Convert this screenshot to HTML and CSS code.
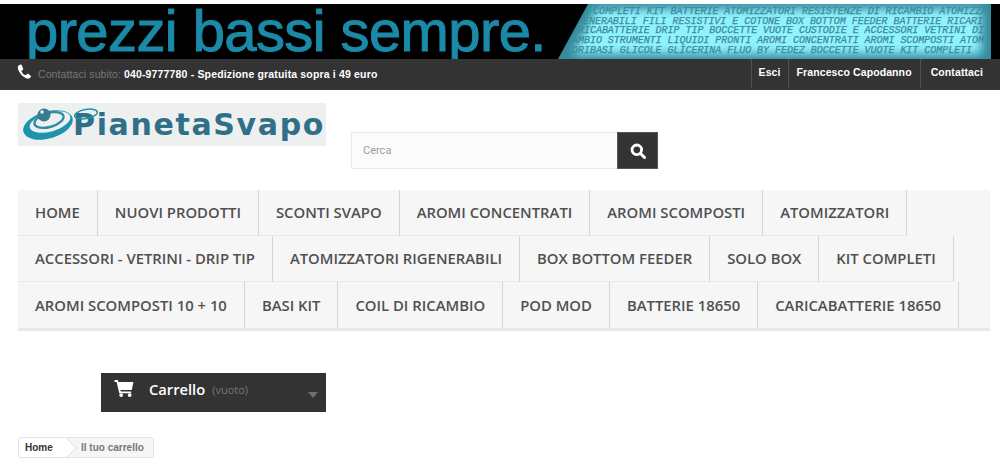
FILE: index.html
```html
<!DOCTYPE html>
<html lang="it">
<head>
<meta charset="utf-8">
<title>Carrello - PianetaSvapo</title>
<link rel="stylesheet" href="styles.css">
</head>
<body>
<div class="banner">
  <div class="slogan">prezzi bassi sempre.</div>
  <div class="ticker">
    <div class="glow"></div>
    <div class="ticker-text">
      <div class="t1">COMPLETI KIT BATTERIE ATOMIZZATORI RESISTENZE DI RICAMBIO ATOMIZZA</div>
      <div class="t2">ENERABILI FILI RESISTIVI E COTONE BOX BOTTOM FEEDER BATTERIE RICARI</div>
      <div class="t3">RICABATTERIE DRIP TIP BOCCETTE VUOTE CUSTODIE E ACCESSORI VETRINI DI</div>
      <div class="t4">AMBIO STRUMENTI LIQUIDI PRONTI AROMI CONCENTRATI AROMI SCOMPOSTI ATOM</div>
      <div class="t5">ORIBASI GLICOLE GLICERINA FLUO BY FEDEZ BOCCETTE VUOTE KIT COMPLETI</div>
    </div>
  </div>
</div>
<div class="topbar">
  <div class="contact">
    <svg class="phone" viewBox="0 0 16 16" width="15" height="15"><path fill="#fff" d="M3.6.6 1.4 1.900C.2 3.300 1 6.500 3.200 9.700c2.300 3.300 5.300 5.700 8.200 5.900 1.200.1 2-.3 3.300-1.800.4-.5.300-1-.1-1.300l-2.700-2c-.5-.3-.9-.2-1.300.2l-.8.9c-.3.300-.7.300-1 .1C7.200 11.700 5.400 9.500 4.800 7.700c-.1-.4 0-.7.4-.9l1-.6c.5-.3.600-.7.400-1.200L5 1c-.3-.6-.8-.7-1.400-.4z"/></svg>
    <span class="contact-label">Contattaci subito:</span>
    <strong>040-9777780 - Spedizione gratuita sopra i 49 euro</strong>
  </div>
  <nav class="toplinks">
    <a>Esci</a>
    <a>Francesco Capodanno</a>
    <a>Contattaci</a>
  </nav>
</div>
<header class="head">
  <div class="logo">
    <svg class="swirl" viewBox="0 0 56 40" width="56" height="40">
      <ellipse cx="26" cy="20" rx="25.500" ry="13.500" transform="rotate(-16 26 20)" fill="#1f93ad"/>
      <ellipse cx="28" cy="17" rx="21" ry="9.500" transform="rotate(-16 28 17)" fill="#eef0f0"/>
      <ellipse cx="27" cy="15" rx="15" ry="7" transform="rotate(-16 27 15)" fill="none" stroke="#2d8da6" stroke-width="2.400"/>
      <circle cx="22" cy="10" r="6.500" fill="#3a7b92"/>
      <circle cx="20" cy="7" r="1.800" fill="#eef0f0"/>
    </svg>
    <span class="logo-text">PianetaSvapo</span>
    <svg class="ring" viewBox="0 0 26 14" width="26" height="14"><ellipse cx="13" cy="7" rx="11.500" ry="4.500" transform="rotate(-10 13 7)" fill="none" stroke="#1f93ad" stroke-width="1.500"/></svg>
  </div>
  <form class="search">
    <input class="search-input" type="text" placeholder="Cerca">
    <button class="search-btn" type="button" aria-label="Cerca">
      <svg viewBox="0 0 16 16" width="16" height="16"><circle cx="6.800" cy="6.800" r="4.800" fill="none" stroke="#fff" stroke-width="2.800"/><path d="M10.500 10.500 14.500 14.500" stroke="#fff" stroke-width="3" stroke-linecap="round"/></svg>
    </button>
  </form>
</header>
<nav class="menu">
  <div class="menu-row">
    <a>HOME</a><a>NUOVI PRODOTTI</a><a>SCONTI SVAPO</a><a>AROMI CONCENTRATI</a><a>AROMI SCOMPOSTI</a><a>ATOMIZZATORI</a>
  </div>
  <div class="menu-row">
    <a>ACCESSORI - VETRINI - DRIP TIP</a><a>ATOMIZZATORI RIGENERABILI</a><a>BOX BOTTOM FEEDER</a><a>SOLO BOX</a><a>KIT COMPLETI</a>
  </div>
  <div class="menu-row">
    <a>AROMI SCOMPOSTI 10 + 10</a><a>BASI KIT</a><a>COIL DI RICAMBIO</a><a>POD MOD</a><a>BATTERIE 18650</a><a>CARICABATTERIE 18650</a>
  </div>
</nav>
<div class="cart">
  <svg class="cart-icon" viewBox="0 0 20 18" width="20" height="17"><path fill="#fff" d="M0 0h3.500l.6 2H20l-1.800 8.500H6.200l.4 1.700h11v1.800H5L2.200 2H0z"/><circle cx="7" cy="16" r="2" fill="#fff"/><circle cx="16" cy="16" r="2" fill="#fff"/></svg>
  <span class="cart-title">Carrello</span>
  <span class="cart-empty">(vuoto)</span>
  <span class="cart-caret"></span>
</div>
<div class="crumbs">
  <a class="crumb-home">Home</a>
  <span class="crumb-current">Il tuo carrello</span>
</div>
</body>
</html>
```

FILE: styles.css
```css
* { box-sizing: border-box; }
html, body { margin: 0; padding: 0; }
body {
  width: 1000px;
  height: 471px;
  overflow: hidden;
  background: #fff;
  padding-top: 4px;
  font-family: "Liberation Sans", Arial, sans-serif;
}
.banner {
  height: 55px;
  background: #000;
  overflow: hidden;
  position: relative;
}
.slogan {
  margin-left: 26px;
  font-size: 58px;
  line-height: 55px;
  letter-spacing: -.6px;
  color: #1a8aa8;
  white-space: nowrap;
  -webkit-text-stroke: 1px #1a8aa8;
  transform: translateY(-1px);
}
.ticker {
  position: absolute;
  top: 0;
  left: 558px;
  width: 433px;
  height: 55px;
  background: #358b9d;
  clip-path: polygon(30px 0, 100% 0, 100% 100%, 0 100%);
  overflow: hidden;
}
.glow {
  position: absolute;
  inset: 0;
  filter: blur(5px);
}
.glow::before {
  content: "";
  position: absolute;
  inset: 0;
  background: #8ff3ff;
  clip-path: polygon(38px 5px, 423px 5px, 423px 50px, 15px 50px);
}
.ticker-text {
  position: relative;
  font-family: "Liberation Mono", monospace;
  font-style: italic;
  font-size: 10px;
  line-height: 9.700px;
  letter-spacing: -.03px;
  color: #3f8a9c;
  -webkit-text-stroke: .25px #3f8a9c;
  white-space: nowrap;
  padding-top: 3px;
}
.t1 { margin-left: 35px; }
.t2 { margin-left: 25px; }
.t3 { margin-left: 20px; }
.t4 { margin-left: 14px; }
.t5 { margin-left: 14px; }
.topbar {
  height: 31px;
  background: #333;
  display: flex;
  justify-content: space-between;
  align-items: stretch;
  color: #fff;
  font-size: 10.500px;
}
.contact {
  display: flex;
  align-items: center;
  padding: 0 0 1px 17px;
  gap: 3px;
}
.phone { margin-top: -5px; margin-right: 3px; }
.contact-label { color: #777; letter-spacing: .1px; }
.contact strong { letter-spacing: .16px; }
.toplinks { display: flex; padding-right: 17px; height: 29px; }
.toplinks a {
  display: flex;
  align-items: center;
  padding: 0 7px 3px 7px;
  font-weight: 700;
  letter-spacing: .1px;
  border-left: 1px solid #515151;
}
.toplinks a:nth-child(2) { padding: 0 8px 3px 8px; }
.toplinks a:last-child { padding-left: 10px; padding-right: 0; }
.head {
  height: 100px;
  display: flex;
  padding: 13px 0 0 18px;
}
.logo {
  position: relative;
  width: 308px;
  height: 43px;
  background: #eef0f0;
  display: flex;
  align-items: center;
  padding-left: 4px;
  overflow: hidden;
}
.swirl { flex: none; }
.ring { position: absolute; left: 55px; top: 4px; }
.logo-text {
  margin-left: -5px;
  font-family: "DejaVu Sans", sans-serif;
  font-weight: 700;
  font-size: 30px;
  letter-spacing: 1.650px;
  color: #2f6f88;
  white-space: nowrap;
}
.search {
  display: flex;
  height: 37px;
  margin: 29px 0 0 25px;
}
.search-input {
  width: 266px;
  height: 37px;
  flex: none;
  border: 1px solid #e9e9e9;
  border-right: 0;
  background: #fbfbfb;
  padding: 0 11px;
  font-family: "Roboto", "Liberation Sans", sans-serif;
  font-size: 11px;
  color: #9c9b9b;
}
.search-input::placeholder { color: #9c9b9b; opacity: 1; }
.search-btn {
  width: 41px;
  height: 37px;
  flex: none;
  padding: 0;
  border: 1px solid #555;
  background: #333;
  display: flex;
  align-items: center;
  justify-content: center;
}
.menu {
  margin: 0 0 0 18px;
  width: 972px;
  height: 141px;
  background: #f6f6f6;
  border-bottom: 3px solid #e9e9e9;
  display: flex;
  flex-direction: column;
}
.menu-row { display: flex; height: 46px; flex: none; }
.menu-row a {
  display: flex;
  align-items: center;
  height: 48px;
  padding: 0 17px 2px;
  background: #f6f6f6;
  font-family: "Open Sans", sans-serif;
  font-weight: 600;
  font-size: 14.850px;
  color: #505050;
  white-space: nowrap;
  border-right: 1px solid #d6d4d4;
  border-bottom: 3px solid #e9e9e9;
}
.menu-row:last-child a { height: 46px; border-bottom: 0; padding-bottom: 0; }
.cart {
  width: 225px;
  height: 39px;
  margin: 42px 0 0 101px;
  background: #333;
  display: flex;
  align-items: center;
  padding: 0 8px 7px 13px;
  color: #fff;
  font-family: "Open Sans", sans-serif;
}
.cart-icon { margin-top: -2px; flex: none; }
.cart-title { margin-left: 15px; font-size: 14.700px; font-weight: 600; }
.cart-empty { margin-left: 7px; margin-top: 1px; font-size: 11px; color: #777; }
.cart-caret {
  margin-left: auto;
  margin-top: 12px;
  border: 5px solid transparent;
  border-bottom: 0;
  border-top: 6px solid #6f6f6f;
}
.crumbs {
  margin: 25px 0 0 18px;
  width: 136px;
  height: 21px;
  border: 1px solid #e4e4e4;
  border-radius: 3px;
  background: #f6f6f6;
  display: flex;
  align-items: center;
  font-size: 10px;
  font-weight: 700;
  overflow: hidden;
}
.crumb-home {
  position: relative;
  height: 100%;
  width: 48px;
  padding-left: 6px;
  display: flex;
  align-items: center;
  background: #fff;
  color: #333;
}
.crumb-home::after {
  content: "";
  position: absolute;
  right: -7px;
  top: 3px;
  width: 13px;
  height: 13px;
  background: #fff;
  border-top: 1px solid #e4e4e4;
  border-right: 1px solid #e4e4e4;
  transform: rotate(45deg);
}
.crumb-current { margin-left: 14px; color: #777; white-space: nowrap; }
```
